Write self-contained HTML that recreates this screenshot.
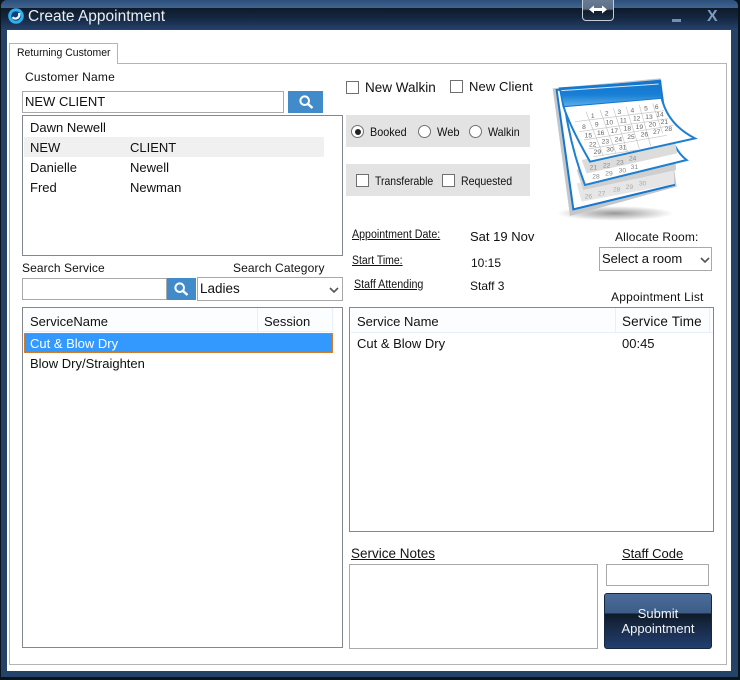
<!DOCTYPE html>
<html><head><meta charset="utf-8"><style>
html,body{margin:0;padding:0;background:#000}
#w{position:relative;width:740px;height:680px;overflow:hidden;background:#0a141c;font-family:"Liberation Sans",sans-serif;color:#111;font-size:13px}
#w div,#w svg,#w span.a{position:absolute;box-sizing:border-box}
.t{white-space:nowrap;line-height:16px;transform-origin:left center}
.u{text-decoration:underline}
.box{background:#fff;border:1px solid #a9a9a9}
.dk{background:#fff;border:1px solid #828790}
.cb{width:13px;height:13px;background:#fff;border:1px solid #707070}
.rd{width:13px;height:13px;background:#fff;border:1px solid #707070;border-radius:50%}
.btn{background:#428bca}
</style></head><body><div id="w">
<div style="left:1px;top:0;width:737px;height:677px;background:#254268;border-radius:6px 6px 0 0"></div>
<div style="left:1px;top:0;width:737px;height:8px;background:linear-gradient(#2c4f7c,#41648f);border-radius:6px 6px 0 0"></div>
<div style="left:1px;top:8px;width:737px;height:21px;background:linear-gradient(#0d1a2b,#14263f 45%,#233f69)"></div>
<div style="left:7px;top:30px;width:724px;height:641px;background:#fff"></div>

<!-- title -->
<svg style="left:8px;top:8px" width="16" height="16" viewBox="0 0 16 16"><circle cx="8" cy="8" r="7.8" fill="#2cb0ee"/><circle cx="8" cy="8" r="4.8" fill="#123f78"/><path d="M4.6 9.2a3.8 3.8 0 0 0 6.6-1.6V5" fill="none" stroke="#f2faff" stroke-width="2.2"/></svg>
<div class="t" style="left:28px;top:8px;font-size:15.5px;line-height:18px;color:#e9eef5">Create Appointment</div>
<div style="left:582px;top:-3px;width:32px;height:24px;border:1px solid #c4ccd6;border-radius:0 0 4px 4px;background:linear-gradient(#6a7d94 0,#5d7088 50%,#0f1c2b 58%,#1c2f49)"></div>
<svg style="left:588px;top:4px" width="20" height="11" viewBox="0 0 20 11"><path d="M1 5.5L6 1.5V4H14V1.5L19 5.5L14 9.5V7H6V9.5Z" fill="#fff"/></svg>
<div style="left:672px;top:19px;width:9px;height:3px;background:#6f8fb3"></div>
<div class="t" style="left:707px;top:9px;font-size:16px;font-weight:bold;color:#7e9cc0">X</div>

<!-- tab control -->
<div style="left:9px;top:63px;width:718px;height:602px;border:1px solid #b4b4b4"></div>
<div style="left:9px;top:43px;width:109px;height:21px;background:#fff;border:1px solid #b4b4b4;border-bottom:0"></div>
<div class="t" style="left:17px;top:45px;font-size:11px;transform:scaleX(.95)">Returning Customer</div>

<!-- customer -->
<div class="t" style="left:25px;top:69px;font-size:12px;letter-spacing:.2px">Customer Name</div>
<div class="box" style="left:22px;top:91px;width:262px;height:22px"></div>
<div class="t" style="left:25px;top:94px;font-size:13px">NEW CLIENT</div>
<div class="btn" style="left:288px;top:91px;width:35px;height:22px"></div>
<svg style="left:298px;top:94px" width="16" height="16" viewBox="0 0 16 16"><circle cx="6.7" cy="6.7" r="4.3" fill="none" stroke="#fff" stroke-width="2"/><path d="M10 10L14.5 14" stroke="#fff" stroke-width="2.4"/></svg>
<div class="dk" style="left:22px;top:115px;width:321px;height:141px"></div>
<div style="left:24px;top:137px;width:300px;height:20px;background:#f0f0f0"></div>
<div class="t" style="left:30px;top:120px">Dawn Newell</div>
<div class="t" style="left:30px;top:140px">NEW</div><div class="t" style="left:130px;top:140px">CLIENT</div>
<div class="t" style="left:30px;top:160px">Danielle</div><div class="t" style="left:130px;top:160px">Newell</div>
<div class="t" style="left:30px;top:180px">Fred</div><div class="t" style="left:130px;top:180px">Newman</div>

<!-- checks -->
<div class="cb" style="left:346px;top:81px"></div>
<div class="t" style="left:365px;top:80px;font-size:13.5px">New Walkin</div>
<div class="cb" style="left:450px;top:80px"></div>
<div class="t" style="left:469px;top:79px;font-size:13px;letter-spacing:.1px">New Client</div>

<div style="left:346px;top:115px;width:184px;height:32px;background:#e3e3e3"></div>
<div class="rd" style="left:351px;top:125px"></div>
<div style="left:354.5px;top:128.5px;width:6px;height:6px;border-radius:50%;background:#222"></div>
<div class="t" style="left:370px;top:124px;font-size:12px;transform:scaleX(.9)">Booked</div>
<div class="rd" style="left:418px;top:125px"></div>
<div class="t" style="left:437px;top:124px;font-size:12px;transform:scaleX(.92)">Web</div>
<div class="rd" style="left:469px;top:125px"></div>
<div class="t" style="left:488px;top:124px;font-size:12px;transform:scaleX(.89)">Walkin</div>

<div style="left:346px;top:164px;width:184px;height:32px;background:#e3e3e3"></div>
<div class="cb" style="left:356px;top:174px"></div>
<div class="t" style="left:375px;top:173px;font-size:12px;transform:scaleX(.87)">Transferable</div>
<div class="cb" style="left:442px;top:174px"></div>
<div class="t" style="left:461px;top:173px;font-size:12px;transform:scaleX(.88)">Requested</div>

<!-- calendar -->
<svg style="left:540px;top:70px" width="170" height="160" viewBox="0 0 510 480">
<defs><linearGradient id="h" x1="0" y1="0" x2="0" y2="1"><stop offset="0" stop-color="#0f74cc"/><stop offset=".55" stop-color="#1a80d6"/><stop offset="1" stop-color="#5db0ea"/></linearGradient>
<radialGradient id="sh"><stop offset="0" stop-color="#777" stop-opacity=".75"/><stop offset="1" stop-color="#777" stop-opacity="0"/></radialGradient>
<filter id="b"><feGaussianBlur stdDeviation="0.9"/></filter></defs>
<g filter="url(#b)">
<ellipse cx="225" cy="430" rx="175" ry="22" fill="url(#sh)"/>
<path d="M38 55L362 25L410 350L90 438Z" fill="#c4c6ca"/>
<path d="M50 60L360 32L402 345L100 418Z" fill="#fff" stroke="#1877cc" stroke-width="6"/>
<path d="M110 340L400 290L404 342L125 395Z" fill="#e6e6e6"/>
<path d="M110 300L405 225L408 300L130 360Z" fill="#cfcfcf"/>
<path d="M76 120Q95 240 135 345L440 270Q400 240 385 170Z" fill="#fff" stroke="#1f7fd0" stroke-width="6"/>
<path d="M125 270L405 215L412 250L140 310Z" fill="#dcdcdc"/>
<path d="M60 55L360 35L365 85Q385 165 465 205L150 275Q90 170 70 108Z" fill="#fff" stroke="#1f7fd0" stroke-width="6"/>
<path d="M58 55L362 33L366 85L72 110Z" fill="url(#h)" stroke="#1877cc" stroke-width="3"/>
<path d="M64 62L356 42" stroke="#cfe6f8" stroke-width="3" fill="none"/>
<path d="M105 155L372 122M118 185L384 146M132 210L400 166M146 237L380 196M160 260L290 240" stroke="#c4c4c4" stroke-width="2" fill="none"/>
<path d="M138 125L190 258M180 120L228 250M220 115L262 244M258 110L298 236M298 105L332 228M338 100L368 190" stroke="#c4c4c4" stroke-width="2" fill="none"/>
<g fill="#666" font-family="Liberation Sans,sans-serif" font-size="20" text-anchor="middle">
<text x="158" y="144">1</text><text x="200" y="137">2</text><text x="238" y="132">3</text><text x="277" y="127">4</text><text x="318" y="122">5</text><text x="350" y="117">6</text>
<text x="132" y="177">8</text><text x="170" y="170">9</text><text x="208" y="164">10</text><text x="250" y="157">11</text><text x="290" y="152">12</text><text x="327" y="147">13</text><text x="360" y="139">14</text>
<text x="145" y="202">15</text><text x="182" y="195">16</text><text x="223" y="189">17</text><text x="262" y="182">18</text><text x="298" y="177">19</text><text x="337" y="169">20</text><text x="373" y="162">21</text>
<text x="158" y="229">22</text><text x="196" y="220">23</text><text x="235" y="214">24</text><text x="273" y="207">25</text><text x="313" y="199">26</text><text x="350" y="192">27</text><text x="385" y="183">28</text>
<text x="172" y="252">29</text><text x="210" y="245">30</text><text x="248" y="239">31</text>
<g fill="#8a8a8a"><text x="160" y="299">21</text><text x="200" y="292">22</text><text x="240" y="284">23</text><text x="278" y="272">24</text>
<text x="168" y="325">28</text><text x="207" y="317">29</text><text x="247" y="307">30</text><text x="283" y="297">31</text></g>
<g fill="#aaa"><text x="145" y="385">26</text><text x="185" y="377">27</text><text x="230" y="365">28</text><text x="268" y="357">29</text><text x="308" y="347">30</text></g>
</g>
</g>
</svg>

<!-- details -->
<div class="t u" style="left:352px;top:227px;font-size:11.5px;transform:scaleX(.926)">Appointment Date:</div>
<div class="t" style="left:470px;top:229px;font-size:13px">Sat 19 Nov</div>
<div class="t u" style="left:352px;top:253px;font-size:11.5px;transform:scaleX(.91)">Start Time:</div>
<div class="t" style="left:471px;top:255px;font-size:12px">10:15</div>
<div class="t u" style="left:354px;top:277px;font-size:11.5px;transform:scaleX(.93)">Staff Attending</div>
<div class="t" style="left:470px;top:278px;font-size:12px">Staff 3</div>
<div class="t" style="left:615px;top:229px;font-size:12px;letter-spacing:.15px">Allocate Room:</div>
<div class="box" style="left:599px;top:247px;width:113px;height:24px"></div>
<div class="t" style="left:602px;top:251px;font-size:13px">Select a room</div>
<svg style="left:700px;top:256px" width="10" height="8" viewBox="0 0 10 8"><path d="M1 2L5 6L9 2" fill="none" stroke="#555" stroke-width="1.6"/></svg>
<div class="t" style="left:611px;top:289px;font-size:12px;letter-spacing:.2px">Appointment List</div>

<!-- search service -->
<div class="t" style="left:22px;top:260px;font-size:12px;letter-spacing:.1px">Search Service</div>
<div class="t" style="left:233px;top:260px;font-size:12px;letter-spacing:.1px">Search Category</div>
<div class="box" style="left:22px;top:278px;width:145px;height:22px"></div>
<div class="btn" style="left:167px;top:278px;width:29px;height:22px"></div>
<svg style="left:173px;top:281px" width="16" height="16" viewBox="0 0 16 16"><circle cx="6.7" cy="6.7" r="4.3" fill="none" stroke="#fff" stroke-width="2"/><path d="M10 10L14.5 14" stroke="#fff" stroke-width="2.4"/></svg>
<div class="box" style="left:197px;top:277px;width:146px;height:24px"></div>
<div class="t" style="left:200px;top:281px;font-size:13.5px">Ladies</div>
<svg style="left:329px;top:286px" width="10" height="8" viewBox="0 0 10 8"><path d="M1 2L5 6L9 2" fill="none" stroke="#555" stroke-width="1.6"/></svg>

<!-- services grid -->
<div class="dk" style="left:22px;top:307px;width:321px;height:341px"></div>
<div style="left:23px;top:308px;width:310px;height:24px;background:#fcfdfe;border-bottom:1px solid #e6effa"></div>
<div style="left:257px;top:308px;width:1px;height:24px;background:#e6effa"></div>
<div style="left:332px;top:308px;width:1px;height:24px;background:#e6effa"></div>
<div class="t" style="left:30px;top:314px">ServiceName</div>
<div class="t" style="left:264px;top:314px">Session</div>
<div style="left:24px;top:333px;width:309px;height:20px;background:#3399ff;border:1px dotted #d9822b"></div>
<div class="t" style="left:30px;top:336px;color:#fff">Cut &amp; Blow Dry</div>
<div class="t" style="left:30px;top:356px">Blow Dry/Straighten</div>

<!-- appointment grid -->
<div class="dk" style="left:349px;top:307px;width:365px;height:225px"></div>
<div style="left:351px;top:308px;width:362px;height:25px;background:#fcfdfe;border-bottom:1px solid #e6effa"></div>
<div style="left:615px;top:308px;width:1px;height:25px;background:#e6effa"></div>
<div style="left:709px;top:308px;width:1px;height:25px;background:#e6effa"></div>
<div class="t" style="left:357px;top:314px">Service Name</div>
<div class="t" style="left:622px;top:314px;font-size:13.5px;letter-spacing:.15px">Service Time</div>
<div class="t" style="left:357px;top:336px">Cut &amp; Blow Dry</div>
<div class="t" style="left:622px;top:336px">00:45</div>

<!-- notes -->
<div class="t u" style="left:351px;top:546px;font-size:13.5px">Service Notes</div>
<div class="box" style="left:349px;top:564px;width:249px;height:85px"></div>
<div class="t u" style="left:622px;top:546px">Staff Code</div>
<div class="box" style="left:606px;top:564px;width:103px;height:22px"></div>
<div style="left:604px;top:593px;width:108px;height:56px;border-radius:3px;border:1px solid #16283f;background:linear-gradient(#4a6c98 0,#3d5d88 35%,#0e1a2a 37%,#16263f 55%,#223f70 100%)"></div>
<div class="t" style="left:604px;top:606px;width:108px;text-align:center;color:#f2f5f8;font-size:13px;line-height:15px">Submit<br>Appointment</div>

<div style="left:0;top:677px;width:740px;height:3px;background:#0a141c"></div>
</div></body></html>
